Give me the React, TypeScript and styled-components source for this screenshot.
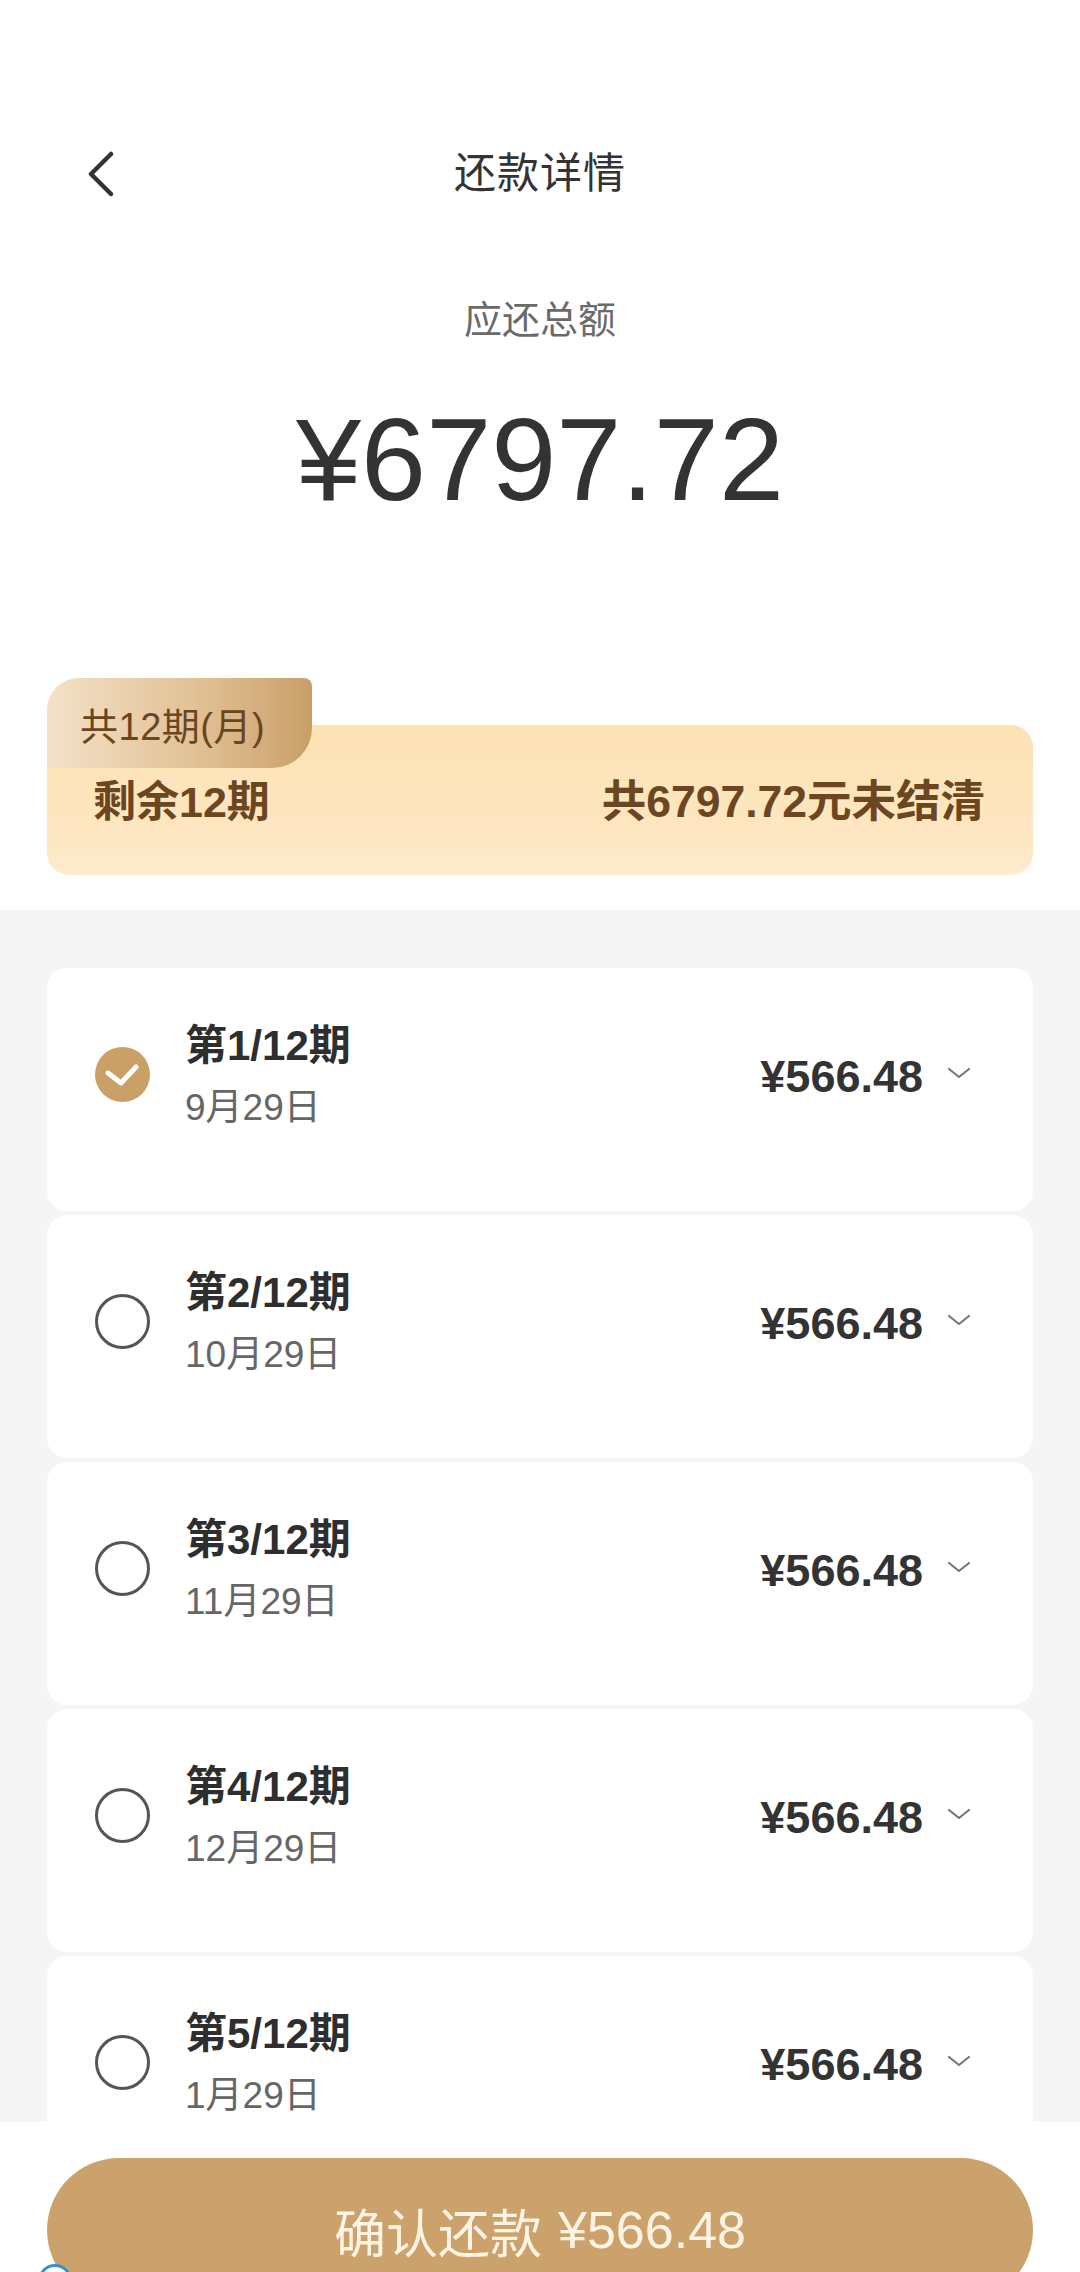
import React from "react";
import styled, { createGlobalStyle } from "styled-components";

const GlobalStyle = createGlobalStyle`
  html, body {
    margin: 0;
    padding: 0;
    background: #ffffff;
  }
  body {
    font-family: "Liberation Sans", "Noto Sans CJK SC", sans-serif;
    -webkit-font-smoothing: antialiased;
  }
  * { box-sizing: border-box; }
`;

const Page = styled.div`
  position: relative;
  width: 1080px;
  height: 2272px;
  overflow: hidden;
  display: flex;
  flex-direction: column;
  background: #ffffff;
  font-family: "Liberation Sans", "Noto Sans CJK SC", sans-serif;
`;

const NavBar = styled.header`
  margin-top: 94px;
  height: 160px;
  display: grid;
  grid-template-columns: 1fr auto 1fr;
  align-items: center;
  flex-shrink: 0;
`;

const BackButton = styled.button`
  justify-self: start;
  margin-left: 80px;
  width: 42px;
  height: 56px;
  padding: 0;
  border: none;
  background: transparent;
  display: flex;
  align-items: center;
  justify-content: center;
`;

const Title = styled.h1`
  margin: 0;
  font-size: 42px;
  font-weight: 400;
  color: #333333;
  line-height: 52px;
  letter-spacing: 1px;
`;

const TotalLabel = styled.div`
  margin-top: 40px;
  text-align: center;
  font-size: 38px;
  line-height: 52px;
  color: #6a6a6a;
  flex-shrink: 0;
`;

const TotalAmount = styled.div`
  margin-top: 44px;
  text-align: center;
  font-size: 117px;
  line-height: 140px;
  color: #333333;
  font-weight: 400;
  flex-shrink: 0;
`;

const SummaryCard = styled.section`
  position: relative;
  margin: 148px 47px 0;
  height: 197px;
  flex-shrink: 0;
  &::before {
    content: "";
    position: absolute;
    left: 0;
    right: 0;
    top: 47px;
    bottom: 0;
    border-radius: 22px;
    background: linear-gradient(180deg, #fde2b4 0%, #fde7c2 75%, #fdecd0 100%);
  }
`;

const PeriodTab = styled.div`
  position: relative;
  z-index: 1;
  width: 265px;
  height: 90px;
  padding-left: 33px;
  display: flex;
  align-items: center;
  border-radius: 32px 8px 40px 0;
  background: linear-gradient(90deg, #f4e1c8 0%, #e2c297 55%, #c99f68 100%);
  color: #694520;
  font-size: 38px;
  letter-spacing: 0.5px;
`;

const SummaryRow = styled.div`
  position: relative;
  z-index: 1;
  margin-top: 8px;
  padding: 0 48px 0 46px;
  display: flex;
  justify-content: space-between;
  align-items: center;
  line-height: 52px;
  font-size: 43px;
  font-weight: 700;
  color: #6b4621;
`;

const SummaryTotal = styled.span`
  font-size: 44.5px;
`;

const ListArea = styled.main`
  margin-top: 35px;
  flex: 1;
  min-height: 0;
  overflow: hidden;
  background: #f5f5f5;
  padding: 58px 47px 0;
  display: flex;
  flex-direction: column;
  gap: 4px;
`;

const InstallmentCard = styled.div`
  flex-shrink: 0;
  height: 243px;
  background: #ffffff;
  border-radius: 20px;
  padding: 52px 62px 0 48px;
  display: flex;
  align-items: flex-start;
`;

const CardRow = styled.div`
  flex: 1;
  display: flex;
  align-items: center;
`;

const Radio = styled.span<{ $checked: boolean }>`
  width: 55px;
  height: 55px;
  border-radius: 50%;
  flex-shrink: 0;
  display: flex;
  align-items: center;
  justify-content: center;
  background: ${(p) => (p.$checked ? "#c9a066" : "transparent")};
  border: ${(p) => (p.$checked ? "none" : "3.5px solid #555555")};
  margin-top: -6px;
`;

const TextBlock = styled.div`
  margin-left: 35px;
  display: flex;
  flex-direction: column;
`;

const PeriodTitle = styled.div`
  font-size: 42px;
  font-weight: 700;
  line-height: 52px;
  color: #2e2e2e;
`;

const PeriodDate = styled.div`
  margin-top: 10px;
  font-size: 37px;
  line-height: 52px;
  color: #666666;
`;

const Amount = styled.div`
  margin-left: auto;
  font-size: 45px;
  font-weight: 700;
  color: #333333;
  line-height: 52px;
`;

const Chevron = styled.span`
  margin-left: 24px;
  display: flex;
  align-items: center;
  margin-top: -8px;
`;

const Footer = styled.footer`
  flex-shrink: 0;
  height: 150px;
  background: #ffffff;
  padding: 36px 47px 0;
`;

const ConfirmButton = styled.button`
  width: 100%;
  height: 144px;
  border: none;
  border-radius: 72px;
  background: #cba26b;
  color: #fff4e4;
  font-family: "Liberation Sans", "Noto Sans CJK SC", sans-serif;
  font-size: 52px;
  font-weight: 400;
  display: flex;
  align-items: center;
  justify-content: center;
  gap: 16px;
`;

const FloatBubble = styled.span`
  position: absolute;
  left: 38px;
  top: 2264px;
  width: 34px;
  height: 34px;
  border-radius: 50%;
  border: 3px solid #3a8fd6;
  background: #ffffff;
`;

const BackIcon = () => (
  <svg width="30" height="46" viewBox="0 0 30 46" fill="none">
    <path d="M25 3 L5 23 L25 43" stroke="#333333" strokeWidth="4.5" strokeLinecap="round" strokeLinejoin="round" />
  </svg>
);

const CheckIcon = () => (
  <svg width="55" height="55" viewBox="0 0 55 55" fill="none">
    <path d="M13 26 L26 36 L41 20" stroke="#ffffff" strokeWidth="5" strokeLinecap="round" strokeLinejoin="round" />
  </svg>
);

const ChevronDown = () => (
  <svg width="24" height="12" viewBox="0 0 24 12" fill="none">
    <path d="M2 2 L12 10 L22 2" stroke="#777777" strokeWidth="2.2" strokeLinecap="round" strokeLinejoin="round" />
  </svg>
);

const installments = [
  { title: "第1/12期", date: "9月29日", checked: true },
  { title: "第2/12期", date: "10月29日", checked: false },
  { title: "第3/12期", date: "11月29日", checked: false },
  { title: "第4/12期", date: "12月29日", checked: false },
  { title: "第5/12期", date: "1月29日", checked: false },
];

export default function App() {
  return (
    <>
      <GlobalStyle />
      <Page>
        <NavBar>
          <BackButton aria-label="返回">
            <BackIcon />
          </BackButton>
          <Title>还款详情</Title>
          <span />
        </NavBar>
        <TotalLabel>应还总额</TotalLabel>
        <TotalAmount>¥6797.72</TotalAmount>
        <SummaryCard>
          <PeriodTab>共12期(月)</PeriodTab>
          <SummaryRow>
            <span>剩余12期</span>
            <SummaryTotal>共6797.72元未结清</SummaryTotal>
          </SummaryRow>
        </SummaryCard>
        <ListArea>
          {installments.map((it) => (
            <InstallmentCard key={it.title}>
              <CardRow>
                <Radio $checked={it.checked}>{it.checked && <CheckIcon />}</Radio>
                <TextBlock>
                  <PeriodTitle>{it.title}</PeriodTitle>
                  <PeriodDate>{it.date}</PeriodDate>
                </TextBlock>
                <Amount>¥566.48</Amount>
                <Chevron>
                  <ChevronDown />
                </Chevron>
              </CardRow>
            </InstallmentCard>
          ))}
        </ListArea>
        <Footer>
          <ConfirmButton>
            <span>确认还款</span>
            <span>¥566.48</span>
          </ConfirmButton>
        </Footer>
        <FloatBubble />
      </Page>
    </>
  );
}
